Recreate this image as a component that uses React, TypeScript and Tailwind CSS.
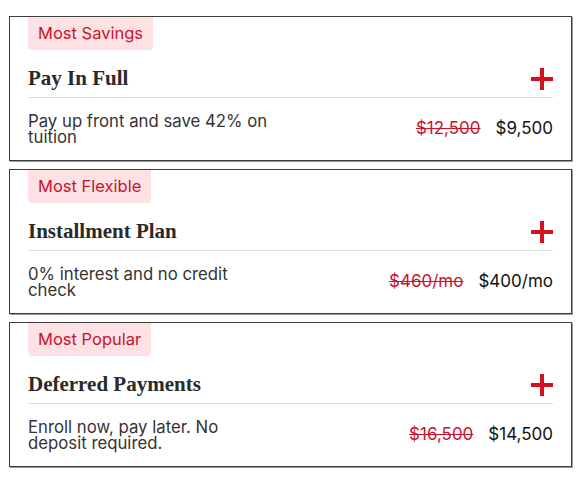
import React from "react";

/* ============================================================
   DATA
============================================================ */

type Plan = {
  badge: string;
  title: string;
  desc: string[];
  was: string;
  now: string;
};

const PLANS: Plan[] = [
  {
    badge: "Most Savings",
    title: "Pay In Full",
    desc: ["Pay up front and save 42% on", "tuition"],
    was: "$12,500",
    now: "$9,500",
  },
  {
    badge: "Most Flexible",
    title: "Installment Plan",
    desc: ["0% interest and no credit", "check"],
    was: "$460/mo",
    now: "$400/mo",
  },
  {
    badge: "Most Popular",
    title: "Deferred Payments",
    desc: ["Enroll now, pay later. No", "deposit required."],
    was: "$16,500",
    now: "$14,500",
  },
];

const SANS = "font-['Inter','Noto_Sans',sans-serif]";
const SERIF = "font-['Liberation_Serif','DejaVu_Serif',serif]";

/* ============================================================
   PLUS ICON
============================================================ */

const PlusIcon = () => (
  <svg width="22" height="22" viewBox="0 0 22 22" aria-hidden>
    <rect x="0" y="9" width="22" height="4" fill="#d4121e" />
    <rect x="9" y="0" width="4" height="22" fill="#d4121e" />
  </svg>
);

/* ============================================================
   PLAN CARD
============================================================ */

const PlanCard: React.FC<{ plan: Plan }> = ({ plan }) => (
  <div className="border border-[#3c3c3c] bg-white px-[18px] pb-[15px] shadow-[1px_1px_0_#9a9a9a]">
    <div className="flex">
      <span
        className={`${SANS} flex h-[33px] items-center rounded-b-[4px] bg-[#fde1e3] px-[10px] text-[16.5px] text-[#c8142f]`}
      >
        {plan.badge}
      </span>
    </div>

    <div className="mt-[14px] flex h-[34px] items-center justify-between border-b border-[#dcdcdc] pb-[3px]">
      <h2 className={`${SERIF} text-[21px] font-bold text-[#2a2a2a]`}>
        {plan.title}
      </h2>
      <PlusIcon />
    </div>

    <div className="mt-[15px] flex items-center justify-between">
      <p className={`${SANS} text-[16.75px] leading-[16px] text-[#333]`}>
        {plan.desc[0]}
        <br />
        {plan.desc[1]}
      </p>
      <div className={`${SANS} flex items-center gap-[15px] text-[17px]`}>
        <span className="text-[#c8142f] line-through">{plan.was}</span>
        <span className="text-[#111]">{plan.now}</span>
      </div>
    </div>
  </div>
);

/* ============================================================
   MAIN APP
============================================================ */

export default function App() {
  return (
    <div className="min-h-screen bg-white pt-4 pl-[9px] pr-[9px]">
      <div className="flex w-[563px] flex-col gap-[8px]">
        {PLANS.map((p) => (
          <PlanCard key={p.title} plan={p} />
        ))}
      </div>
    </div>
  );
}
